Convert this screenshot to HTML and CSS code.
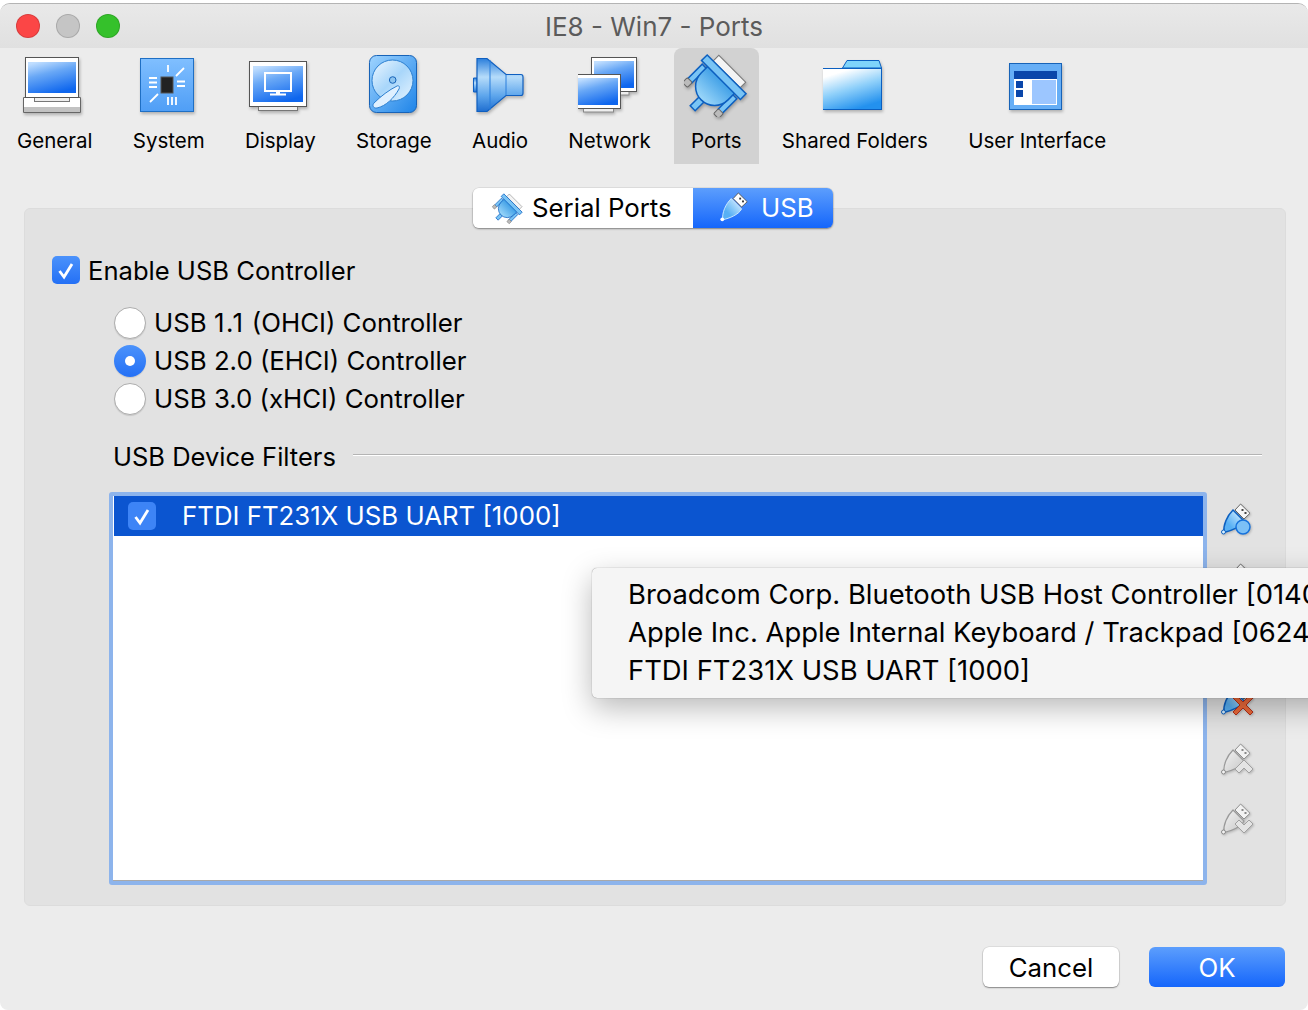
FILE: index.html
```html
<!DOCTYPE html>
<html lang="en">
<head>
<meta charset="utf-8">
<title>IE8 - Win7 - Ports</title>
<link rel="stylesheet" href="styles.css">
</head>
<body>
<svg class="defs" width="0" height="0" aria-hidden="true">
  <defs>
    <linearGradient id="sky" x1="0.2" y1="0" x2="0.6" y2="1"><stop offset="0" stop-color="#c0deff"/><stop offset="0.38" stop-color="#69a8f6"/><stop offset="1" stop-color="#0e66ee"/></linearGradient>
    <linearGradient id="tile" x1="0" y1="0" x2="0" y2="1"><stop offset="0" stop-color="#80bfff"/><stop offset="1" stop-color="#4f9ef6"/></linearGradient>
    <linearGradient id="disk" x1="0" y1="0" x2="1" y2="1"><stop offset="0" stop-color="#9fd4ff"/><stop offset="1" stop-color="#1e84e8"/></linearGradient>
    <linearGradient id="platter" x1="0" y1="0" x2="1" y2="1"><stop offset="0" stop-color="#eef7ff"/><stop offset="0.5" stop-color="#a8d6fa"/><stop offset="1" stop-color="#e6f4ff"/></linearGradient>
    <linearGradient id="horn" x1="0" y1="0" x2="0" y2="1"><stop offset="0" stop-color="#2b7fdc"/><stop offset="0.35" stop-color="#b6dcfa"/><stop offset="0.7" stop-color="#5ea6ec"/><stop offset="1" stop-color="#1f6ed0"/></linearGradient>
    <linearGradient id="folder" x1="0.1" y1="0" x2="0.55" y2="1"><stop offset="0.15" stop-color="#ffffff"/><stop offset="0.55" stop-color="#8fd0fa"/><stop offset="1" stop-color="#2391ee"/></linearGradient>
    <linearGradient id="plug" x1="1" y1="0" x2="0" y2="1"><stop offset="0.1" stop-color="#d4eeff"/><stop offset="0.7" stop-color="#58b0f4"/></linearGradient>
    <linearGradient id="plugv" x1="0" y1="0" x2="0" y2="1"><stop offset="0" stop-color="#3f9fe6"/><stop offset="1" stop-color="#9dd8fa"/></linearGradient>
    <linearGradient id="grayplug" x1="0" y1="0" x2="1" y2="1"><stop offset="0" stop-color="#f3f3f3"/><stop offset="1" stop-color="#c6c6c6"/></linearGradient>
    <symbol id="ports" viewBox="-36 -36 72 72">
      <g transform="rotate(45)">
        <rect x="-19" y="-23" width="38" height="8" fill="#f4f4f4" stroke="#777" stroke-width="1"/>
        <rect x="-24.500" y="-5" width="6" height="21" fill="#79c4f5" stroke="#0c5fc0" stroke-width="1.500"/>
        <rect x="18.500" y="-5" width="6" height="21" fill="#79c4f5" stroke="#0c5fc0" stroke-width="1.500"/>
        <rect x="-25.500" y="15" width="7" height="7" rx="1.500" fill="#bbb" stroke="#666"/>
        <rect x="18.500" y="15" width="7" height="7" rx="1.500" fill="#bbb" stroke="#666"/>
        <rect x="-3.500" y="18" width="7" height="15" fill="#79c4f5" stroke="#0c5fc0" stroke-width="1.500"/>
        <path d="M-19-8H19V2A19 19 0 0 1-19 2Z" fill="url(#plugv)" stroke="#0c5fc0" stroke-width="1.500"/>
        <rect x="-27.500" y="-15" width="55" height="8" fill="#79c4f5" stroke="#0c5fc0" stroke-width="1.500"/>
      </g>
    </symbol>
    <symbol id="usbblue" viewBox="0 0 34 34">
      <path d="M20.600 1 30 10.300 24 16 15 7Z" fill="#f6f6f6" stroke="#666"/>
      <rect x="21.500" y="6" width="2" height="2" fill="#444"/><rect x="24.500" y="9" width="2" height="2" fill="#444"/>
      <path d="M13 7 24 18C21 24 11 28 4 29.500 3 22 7 13 13 7Z" fill="url(#plug)" stroke="#0c5fc0" stroke-width="1.500"/>
      <circle cx="3.500" cy="29" r="2" fill="#d8f0ff" stroke="#0c5fc0"/>
    </symbol>
    <symbol id="usbgray" viewBox="0 0 34 34">
      <path d="M20.600 1 30 10.300 24 16 15 7Z" fill="#f2f2f2" stroke="#8f8f8f"/>
      <rect x="21.500" y="6" width="2" height="2" fill="#888"/><rect x="24.500" y="9" width="2" height="2" fill="#888"/>
      <path d="M13 7 24 18C21 24 11 28 4 29.500 3 22 7 13 13 7Z" fill="url(#grayplug)" stroke="#999" stroke-width="1.200"/>
      <circle cx="3.500" cy="29" r="2" fill="#f2f2f2" stroke="#888"/>
    </symbol>
  </defs>
</svg>

<div class="window">
  <header class="titlebar">
    <div class="lights">
      <span class="light light-close"></span>
      <span class="light light-min"></span>
      <span class="light light-max"></span>
    </div>
    <h1 class="title">IE8 - Win7 - Ports</h1>
  </header>

  <nav class="toolbar">
    <div class="tool">
      <svg class="tool-icon" viewBox="23 53 64 64" width="64" height="64">
        <rect x="34" y="96" width="36" height="6" fill="#e8e8e8" stroke="#777"/>
        <path d="M23.500 97.500H80.500V112.500H23.500Z" fill="#fff" stroke="#666"/>
        <rect x="24" y="107" width="56" height="5" fill="#c2c2c2"/>
        <rect x="34.500" y="97.500" width="35" height="4" fill="#eee" stroke="#777"/>
        <rect x="25.500" y="57.500" width="53" height="40" fill="#fff" stroke="#555"/>
        <rect x="28" y="62" width="48" height="31" fill="url(#sky)"/>
      </svg>
      <span class="tool-label">General</span>
    </div>
    <div class="tool">
      <svg class="tool-icon" viewBox="137 53 64 64" width="64" height="64">
        <rect x="140.500" y="58.500" width="53" height="53" fill="url(#tile)" stroke="#1f6fc4"/>
        <g stroke="#fff" stroke-width="1.800" fill="none">
          <path d="M168 65V72M176 76 184 68M177 81.500H185M177 86H185M149 78H157M149 82.500H157M149 87H157M150 102 158 94M168 97V105M172 97V105M176 97V105"/>
        </g>
        <rect x="161" y="77" width="12" height="16" fill="#222" stroke="#555"/>
      </svg>
      <span class="tool-label">System</span>
    </div>
    <div class="tool">
      <svg class="tool-icon" viewBox="248 53 64 64" width="64" height="64">
        <rect x="258.500" y="106.500" width="39" height="4" fill="#eee" stroke="#777"/>
        <rect x="249.500" y="61.500" width="57" height="45" fill="#fff" stroke="#555"/>
        <rect x="253" y="66" width="50" height="36" fill="url(#sky)"/>
        <rect x="265" y="73" width="26" height="18" fill="none" stroke="#fff" stroke-width="2"/>
        <path d="M276 92.500H280M270 94.500H286" stroke="#fff" stroke-width="2"/>
      </svg>
      <span class="tool-label">Display</span>
    </div>
    <div class="tool">
      <svg class="tool-icon" viewBox="362 53 64 64" width="64" height="64">
        <rect x="369.500" y="55.500" width="47" height="57" rx="7" fill="url(#disk)" stroke="#1763b8"/>
        <circle cx="392.500" cy="80.500" r="20.500" fill="url(#platter)" stroke="#2c7fd0"/>
        <circle cx="392.700" cy="80" r="3.300" fill="#8cc4f0" stroke="#1763b8"/>
        <path d="M397 86C399 85 400 87 399 89 394 98 386 106 377 108 373 108.500 372 105 374 103 381 96 389 90 397 86Z" fill="#dff0ff" stroke="#2c7fd0"/>
      </svg>
      <span class="tool-label">Storage</span>
    </div>
    <div class="tool">
      <svg class="tool-icon" viewBox="469 53 64 64" width="64" height="64">
        <path d="M478 78H474.500V92H478Z" fill="url(#horn)" stroke="#0f5fc0"/>
        <path d="M478 58.500H488L507 74.500H522Q524 74.500 524 77V93Q524 95.500 522 95.500H507L488 111.500H478Z" fill="url(#horn)" stroke="#0f5fc0" stroke-width="1.200"/>
        <path d="M491 60V110M507 75V95" stroke="#2b7fdc" stroke-width="1" fill="none"/>
      </svg>
      <span class="tool-label">Audio</span>
    </div>
    <div class="tool">
      <svg class="tool-icon" viewBox="579 53 64 64" width="64" height="64">
        <rect x="612" y="90" width="18" height="5" fill="#eee" stroke="#888"/>
        <rect x="592.500" y="57.500" width="45" height="34" fill="#fff" stroke="#555"/>
        <rect x="595" y="61" width="40" height="27" fill="url(#sky)"/>
        <rect x="584.500" y="107.500" width="30" height="4.500" fill="#eee" stroke="#888"/>
        <rect x="576.500" y="74.500" width="45" height="34" fill="#fff" stroke="#555"/>
        <rect x="579" y="78" width="40" height="27" fill="url(#sky)"/>
      </svg>
      <span class="tool-label">Network</span>
    </div>
    <div class="tool is-active">
      <svg class="tool-icon" viewBox="-32 -32 64 64" width="64" height="64">
        <use href="#ports" x="-36" y="-36" width="72" height="72"/>
      </svg>
      <span class="tool-label">Ports</span>
    </div>
    <div class="tool">
      <svg class="tool-icon" viewBox="823 53 64 64" width="64" height="64">
        <path d="M842.500 68 847 60.500H879L881.500 68Z" fill="#7fd4fb" stroke="#0b5fc0"/>
        <rect x="822.500" y="68.500" width="59" height="41" fill="url(#folder)" stroke="#0b5fc0"/>
      </svg>
      <span class="tool-label">Shared Folders</span>
    </div>
    <div class="tool">
      <svg class="tool-icon" viewBox="1005 53 64 64" width="64" height="64">
        <rect x="1009.500" y="63.500" width="52" height="46" fill="#66aef6" stroke="#1763b8"/>
        <rect x="1014" y="71" width="43" height="34" fill="#fff"/>
        <rect x="1014" y="71" width="43" height="8" fill="#0a46aa"/>
        <rect x="1032" y="80" width="24" height="24" fill="#9cc6ff"/>
        <rect x="1016" y="81" width="7" height="7" fill="#0a46aa"/>
        <rect x="1016" y="90" width="7" height="7" fill="#0a46aa"/>
      </svg>
      <span class="tool-label">User Interface</span>
    </div>
  </nav>

  <main class="panel">
    <div class="segments">
      <div class="segment segment-serial">
        <svg class="segment-icon" viewBox="-36 -36 72 72" width="34" height="34">
          <use href="#ports" x="-36" y="-36" width="72" height="72"/>
        </svg>
        <span class="segment-text">Serial Ports</span>
      </div>
      <div class="segment segment-usb">
        <svg class="segment-icon" viewBox="0 0 34 34" width="32" height="32">
          <path d="M20.600 1 30 10.300 24 16 15 7Z" fill="#fff" stroke="#555"/>
          <rect x="21.500" y="6" width="2" height="2" fill="#333"/><rect x="24.500" y="9" width="2" height="2" fill="#333"/>
          <path d="M13 7 24 18C21 24 11 28 4 29.500 3 22 7 13 13 7Z" fill="url(#plug)" stroke="#cfeaff"/>
          <circle cx="3.500" cy="29" r="2" fill="#fff"/>
        </svg>
        <span class="segment-text">USB</span>
      </div>
    </div>

    <div class="enable">
      <span class="check"><svg viewBox="0 0 28 28" width="28" height="28"><path d="M7.500 15 12 21 20 8" fill="none" stroke="#fff" stroke-width="2.800"/></svg></span>
      <span class="enable-label">Enable USB Controller</span>
    </div>

    <div class="radios">
      <div class="radio-row"><span class="radio"></span><span class="row-text">USB <span class="wide-digits">1.1</span> (OHCI) Controller</span></div>
      <div class="radio-row"><span class="radio is-on"></span><span class="row-text">USB 2.0 (EHCI) Controller</span></div>
      <div class="radio-row"><span class="radio"></span><span class="row-text">USB 3.0 (xHCI) Controller</span></div>
    </div>

    <div class="group-title">
      <span class="group-label">USB Device Filters</span>
      <span class="group-line"></span>
    </div>

    <div class="filters">
      <div class="list">
        <div class="list-inner">
          <div class="list-row">
            <span class="check check-row"><svg viewBox="0 0 28 28" width="28" height="28"><path d="M7.500 15 12 21 20 8" fill="none" stroke="#fff" stroke-width="2.800"/></svg></span>
            <span class="row-text">FTDI FT231X USB UART [1000]</span>
          </div>
        </div>
      </div>
      <div class="side-tools">
        <svg class="side-icon" viewBox="0 0 34 34" width="34" height="34"><use href="#usbblue"/><circle cx="23" cy="24" r="7" fill="#7cc0f6" stroke="#1672dc" stroke-width="1.500"/></svg>
        <svg class="side-icon" viewBox="0 0 34 34" width="34" height="34"><use href="#usbblue"/><circle cx="23" cy="24" r="7" fill="#7cc0f6" stroke="#1672dc" stroke-width="1.500"/></svg>
        <svg class="side-icon" viewBox="0 0 34 34" width="34" height="34"><use href="#usbblue"/></svg>
        <svg class="side-icon" viewBox="0 0 34 34" width="34" height="34"><use href="#usbblue"/><path d="M16 12 23 19 30 12 33 15 26 22 33 29 30 32 23 25 16 32 13 29 20 22 13 15Z" fill="#ec6a3a" stroke="#b5301a"/></svg>
        <svg class="side-icon" viewBox="0 0 34 34" width="34" height="34"><use href="#usbgray"/><path d="M15 26 24 17 33 26 29 30 24 25 19 30Z" fill="#e4e4e4" stroke="#a0a0a0"/></svg>
        <svg class="side-icon" viewBox="0 0 34 34" width="34" height="34"><use href="#usbgray"/><path d="M15 21 19 17 24 22 29 17 33 21 24 30Z" fill="#e4e4e4" stroke="#a0a0a0"/></svg>
      </div>
      <div class="popup">
        <div>Broadcom Corp. Bluetooth USB Host Controller [0140]</div>
        <div>Apple Inc. Apple Internal Keyboard / Trackpad [0624]</div>
        <div>FTDI FT231X USB UART [1000]</div>
      </div>
    </div>
  </main>

  <footer class="footer">
    <button class="btn btn-cancel" type="button">Cancel</button>
    <button class="btn btn-ok" type="button">OK</button>
  </footer>
</div>
</body>
</html>
```
FILE: styles.css
```css
* { box-sizing: border-box; }
html, body { margin: 0; height: 100%; overflow: hidden; background: #fff; }
body {
  padding-top: 3px;
  font-family: "Inter", "Liberation Sans", sans-serif;
  font-size: 25.8px;
  color: #000;
}
.defs { display: block; width: 0; height: 0; }

.window {
  width: 1308px;
  height: 1007px;
  overflow: hidden;
  background: #ececec;
  border-top: 1px solid #b4b4b4;
  border-radius: 10px 10px 8px 8px;
}

.titlebar {
  height: 44px;
  display: flex;
  align-items: center;
  background: linear-gradient(#e9e9e9, #e0e0e0);
}
.lights { display: flex; gap: 16px; padding-left: 16px; }
.light { width: 24px; height: 24px; border-radius: 50%; border: 1px solid rgba(0,0,0,.14); }
.light-close { background: #fb4646; }
.light-min { background: #c5c5c5; }
.light-max { background: #35c12b; }
.title {
  flex: 1;
  margin: 0 0 0 -120px;
  padding-top: 1px;
  font-size: 26px;
  font-weight: 400;
  color: #5b5b5b;
  text-align: center;
}

.toolbar {
  height: 116px;
  display: flex;
  gap: 6.250px;
}
.tool {
  display: flex;
  flex-direction: column;
  align-items: center;
  padding: 5px 17px 0;
}
.tool.is-active { background: #d2d2d2; border-radius: 8px 8px 0 0; }
.tool-icon {
  display: block;
  flex: none;
  margin: 0 -32px;
  filter: drop-shadow(1px 2px 1.500px rgba(0,0,0,.25));
}
.tool-label { margin-top: 11px; font-size: 20.5px; line-height: 26px; white-space: nowrap; }

.panel {
  width: 1262px;
  height: 698px;
  margin: 44px 0 0 24px;
  background: #e2e2e2;
  border: 1px solid #dcdcdc;
  border-radius: 6px;
}
.segments {
  display: flex;
  width: 360px;
  height: 40px;
  margin: -21px 0 0 448px;
  border-radius: 6px;
  overflow: hidden;
  box-shadow: 0 1px 2px rgba(0,0,0,.4), 0 0 0 .5px rgba(0,0,0,.1);
}
.segment { display: flex; align-items: center; }
.segment-text { padding-bottom: 2px; }
.segment-serial { width: 220px; background: #fff; padding-left: 18px; gap: 7px; }
.segment-usb { width: 140px; background: linear-gradient(#5c9efd, #1566fb); color: #fff; padding-left: 26px; gap: 10px; }
.segment-icon { display: block; flex: none; }

.enable {
  display: flex;
  align-items: center;
  gap: 8px;
  height: 28px;
  margin: 28px 0 0 27px;
}
.enable-label { font-size: 25.6px; }
.check {
  display: block;
  width: 28px;
  height: 28px;
  border-radius: 5px;
  background: linear-gradient(#4b92fb, #2470f5);
  flex: none;
}
.check svg { display: block; }
.check-row { background: #3d84f6; }

.radios { margin: 20px 0 0 89px; }
.radio-row { display: flex; align-items: center; gap: 8px; height: 38px; }
.row-text { padding-bottom: 2px; }
.wide-digits { letter-spacing: 1.500px; }
.radio {
  width: 32px;
  height: 32px;
  border-radius: 50%;
  background: #fff;
  border: 1px solid #adadad;
  box-shadow: 0 1px 1px rgba(0,0,0,.12);
  flex: none;
  display: flex;
  align-items: center;
  justify-content: center;
}
.radio.is-on { background: linear-gradient(#4b92fb, #2470f5); border: 0; }
.radio.is-on::after { content: ""; width: 10px; height: 10px; border-radius: 50%; background: #fff; }

.group-title {
  display: flex;
  align-items: center;
  gap: 17px;
  height: 38px;
  margin: 19px 23px 0 88px;
}
.group-label { font-size: 25.5px; }
.group-line {
  flex: 1;
  height: 2px;
  margin-top: -2px;
  background: linear-gradient(#b4b4b4 50%, #fff 50%);
}

.filters {
  display: flex;
  gap: 13px;
  position: relative;
  margin: 17px 0 0 84px;
}
.list {
  width: 1098px;
  height: 393px;
  border: 4px solid #8db4ec;
  border-radius: 3px;
  flex: none;
}
.list-inner { height: 100%; background: #fff; border-bottom: 1px solid #a9a9a9; padding-left: 1px; }
.list-row {
  display: flex;
  align-items: center;
  gap: 26px;
  height: 40px;
  padding-left: 14px;
  background: #0b55d0;
  color: #fff;
}
.side-tools { display: flex; flex-direction: column; gap: 26px; padding-top: 11px; }
.side-icon { display: block; flex: none; filter: drop-shadow(1px 1px 1px rgba(0,0,0,.2)); }

.popup {
  position: absolute;
  left: 483px;
  top: 76px;
  width: 820px;
  height: 130px;
  padding: 7px 0 0 36px;
  background: #f5f5f5;
  border-radius: 5px;
  box-shadow: 0 0 1px rgba(0,0,0,.55), 0 10px 30px rgba(0,0,0,.28);
  font-size: 27.4px;
  line-height: 38px;
  white-space: nowrap;
}

.footer {
  display: flex;
  justify-content: flex-end;
  gap: 30px;
  padding: 41px 23px 0 0;
}
.btn {
  width: 136px;
  height: 40px;
  padding: 0;
  border: 0;
  border-radius: 6px;
  font: inherit;
}
.btn-cancel { background: #fff; color: #000; box-shadow: 0 1px 1.500px rgba(0,0,0,.4), 0 0 0 .5px rgba(0,0,0,.12); }
.btn-ok { background: linear-gradient(#5c9efd, #1566fb); color: #fff; }
```
